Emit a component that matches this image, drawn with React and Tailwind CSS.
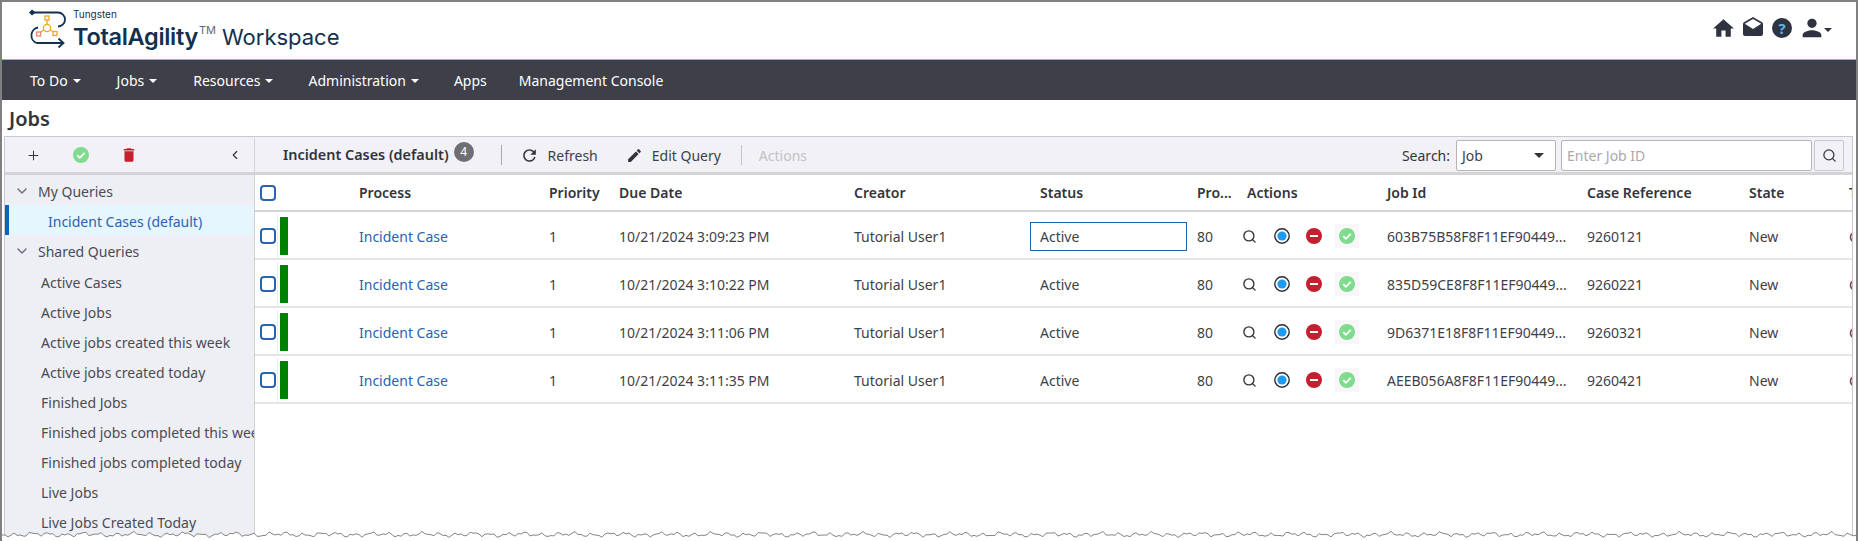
import React from 'react'
import { ChevronDown, ChevronLeft, Plus, Search } from 'lucide-react'
import { MdHome, MdDrafts, MdPerson, MdRefresh, MdEdit, MdDelete } from 'react-icons/md'

const cols = 'grid grid-cols-[23px_71px_190px_71px_234px_186px_157px_50px_140px_200px_162px_100px_60px]'

const rows = [
  { due: '10/21/2024 3:09:23 PM', id: '603B75B58F8F11EF90449...', ref: '9260121', focus: true },
  { due: '10/21/2024 3:10:22 PM', id: '835D59CE8F8F11EF90449...', ref: '9260221' },
  { due: '10/21/2024 3:11:06 PM', id: '9D6371E18F8F11EF90449...', ref: '9260321' },
  { due: '10/21/2024 3:11:35 PM', id: 'AEEB056A8F8F11EF90449...', ref: '9260421' },
]

const shared = ['Active Cases', 'Active Jobs', 'Active jobs created this week', 'Active jobs created today', 'Finished Jobs', 'Finished jobs completed this week', 'Finished jobs completed today', 'Live Jobs', 'Live Jobs Created Today']

const navItems = [
  ['To Do', true, 'ml-[28px]'],
  ['Jobs', true, 'ml-[36px]'],
  ['Resources', true, 'ml-[36px]'],
  ['Administration', true, 'ml-[35px]'],
  ['Apps', false, 'ml-[35px]'],
  ['Management Console', false, 'ml-[32px]'],
]

const Caret = ({ className }) => <span className={`inline-block border-x-[4px] border-t-[4px] border-x-transparent ${className}`} />

const CheckCircle = ({ size = 16 }) => (
  <svg width={size} height={size} viewBox="0 0 16 16">
    <circle cx="8" cy="8" r="8" fill="#7fdc8e" />
    <path d="M4.2 8.2l2.6 2.6 5-5" fill="none" stroke="#fff" strokeWidth="1.8" />
  </svg>
)

const Logo = () => (
  <div className="flex items-start w-[300px]">
    <svg width="72" height="50" viewBox="0 0 72 50" className="shrink-0 -ml-[2px] -mt-[2px]">
      <path d="M33 12.5H58a7 7 0 0 1 0 14" fill="none" stroke="#12304f" strokeWidth="1.8" />
      <path d="M29 9.5l3.5 3-3.5 3-3-3z" transform="translate(3 0)" fill="#12304f" />
      <path d="M38 27.5a8 8 0 0 0 -1 15.5H62" fill="none" stroke="#12304f" strokeWidth="1.8" />
      <path d="M58.5 38.5l5 4.5-5 4.5" fill="none" stroke="#12304f" strokeWidth="1.8" />
      <g fill="none" stroke="#f5a623" strokeWidth="1.3">
        <rect x="45" y="16" width="4" height="4" />
        <path d="M47 20v4M43.5 30l-3 2.5M50.5 30l3 2" />
        <circle cx="47" cy="28" r="3.6" />
        <rect x="53" y="31.5" width="4" height="4" />
      </g>
      <rect x="36.5" y="32" width="4" height="4" fill="none" stroke="#ee8570" strokeWidth="1.3" />
    </svg>
    <div className="text-[#12304f] font-['Inter',sans-serif] leading-none ml-[1px]">
      <div className="text-[10px] mt-[7px] h-[11px]">Tungsten</div>
      <div className="flex items-baseline mt-[5px] whitespace-nowrap">
        <span className="text-[23.5px] font-semibold tracking-[-0.3px]">TotalAgility</span>
        <span className="text-[11px] text-[#5a6b7d] self-start ml-[1px]">TM</span>
        <span className="text-[22px] ml-[6px]">Workspace</span>
      </div>
    </div>
  </div>
)

const TornEdge = () => {
  let top = 'M0 6'
  for (let x = 3; x <= 1858; x += 3) {
    const y = 5.5 + 1.4 * Math.sin(x * 0.37) + 1.1 * Math.sin(x * 1.31 + 1) + 0.8 * Math.sin(x * 0.13)
    top += `L${x} ${y.toFixed(1)}`
  }
  return (
    <svg width="1858" height="12" viewBox="0 0 1858 12" className="absolute left-0 bottom-0">
      <path d={`${top}L1858 12L0 12Z`} fill="#fff" />
      <path d={top} fill="none" stroke="#858585" strokeWidth="1" />
    </svg>
  )
}

export default function App() {
  return (
    <div className="relative w-[1858px] h-[541px] overflow-hidden bg-white font-['Noto_Sans',sans-serif] text-[14px] text-[#3e3f48] border-t-2 border-l-2 border-r-2 border-[#808080]">
      <header className="h-[57px] flex items-start justify-between border-b-0">
        <Logo />
        <div className="flex items-center mt-[12px] mr-[24px] text-[#2f3340]">
          <MdHome size={25} />
          <MdDrafts size={24} className="ml-[5px]" />
          <div className="ml-[7px] w-[20px] h-[20px] rounded-full bg-[#2f3340] text-[#5cb4f0] font-bold text-[15px] leading-[20px] text-center">?</div>
          <MdPerson size={28} className="ml-[6px]" />
          <Caret className="border-t-[#2f3340] -ml-[2px] mt-[3px]" />
        </div>
      </header>

      <nav className="h-[41px] bg-[#3e3f48] border-t border-t-[#e8a33c] flex items-center text-white text-[14px]">
        {navItems.map(([label, caret, gap]) => (
          <div key={label} className={`flex items-center ${gap}`}>
            {label}
            {caret && <Caret className="border-t-white ml-[5px] mt-[2px]" />}
          </div>
        ))}
      </nav>

      <h1 className="h-[36px] pl-[7px] pt-[4px] text-[20px] leading-[30px] font-semibold text-[#33343c]">Jobs</h1>

      <div className="ml-[2px] mr-[3px] h-[405px] border border-[#c9c9cf] flex flex-col">
        <div className="h-[38px] pt-[1px] shrink-0 flex bg-[#f1f1f6] border-b-[3px] border-[#d4d4d8]">
          <div className="w-[250px] shrink-0 flex items-center border-r border-[#d4d4d8] relative">
            <Plus size={15} strokeWidth={1.6} className="ml-[21px] text-[#33343c]" />
            <div className="ml-[32px]"><CheckCircle /></div>
            <MdDelete size={18} className="ml-[31px] text-[#c4202f]" />
            <ChevronLeft size={14} className="ml-[90px] text-[#33343c]" />
          </div>
          <div className="flex-1 flex items-center">
            <span className="ml-[28px] font-semibold text-[14.4px] text-[#33343c]">Incident Cases (default)</span>
            <span className="ml-[5px] mb-[6px] w-[20px] h-[20px] rounded-full bg-[#6f6f73] text-white text-[12px] leading-[20px] text-center">4</span>
            <span className="ml-[27px] w-px h-[20px] bg-[#a8a8ae]" />
            <MdRefresh size={19} className="ml-[18px] text-[#33343c]" />
            <span className="ml-[9px]">Refresh</span>
            <MdEdit size={17} className="ml-[28px] text-[#33343c]" />
            <span className="ml-[9px]">Edit Query</span>
            <span className="ml-[20px] w-px h-[20px] bg-[#c4c4ca]" />
            <span className="ml-[17px] text-[#c2c2c8] text-[14px]">Actions</span>
            <span className="ml-auto text-[#33343c]">Search:</span>
            <div className="ml-[6px] w-[100px] h-[31px] bg-white border border-[#b4b4ba] rounded-[2px] flex items-center justify-between px-[5px]">
              <span className="text-[#3e3f48]">Job</span>
              <Caret className="border-x-[5px] border-t-[5px] border-t-[#33343c] mr-[6px]" />
            </div>
            <div className="ml-[5px] w-[251px] h-[31px] bg-white border border-[#b4b4ba] rounded-[2px] flex items-center px-[5px] text-[#a9a9af]">Enter Job ID</div>
            <div className="ml-[2px] mr-[8px] w-[30px] h-[31px] border border-[#c9c9cf] bg-[#f1f1f6] rounded-[2px] flex items-center justify-center">
              <Search size={15} className="text-[#33343c]" />
            </div>
          </div>
        </div>

        <div className="flex-1 flex min-h-0">
          <aside className="w-[250px] shrink-0 bg-[#eeeff4] border-r border-[#cfcfd4] overflow-hidden whitespace-nowrap">
            <div className="h-[30px] pt-[2px] flex items-center text-[#4a4b55]">
              <ChevronDown size={16} className="ml-[9px] text-[#6b6c75]" />
              <span className="ml-[8px]">My Queries</span>
            </div>
            <div className="h-[30px] pt-[2px] flex items-center bg-[#e6f6fe] border-l-[4px] border-[#0a63bd] pl-[39px] text-[#2a63b4]">Incident Cases (default)</div>
            <div className="h-[30px] pt-[2px] flex items-center text-[#4a4b55]">
              <ChevronDown size={16} className="ml-[9px] text-[#6b6c75]" />
              <span className="ml-[8px]">Shared Queries</span>
            </div>
            {shared.map((q) => (
              <div key={q} className="h-[30px] leading-[31px] pt-[2px] pl-[36px] text-[#4a4b55]">{q}</div>
            ))}
          </aside>

          <div className="flex-1 min-w-0 overflow-hidden">
            <div className={`${cols} h-[37px] items-center font-semibold text-[14px] text-[#33343c] border-b-2 border-[#d4d4d8] w-max`}>
              <div className="pl-[5px]"><span className="block w-[16px] h-[16px] rounded-[4px] border-2 border-[#2a63b4] bg-white" /></div>
              <div />
              <div className="pl-[10px]">Process</div>
              <div className="pl-[10px]">Priority</div>
              <div className="pl-[9px]">Due Date</div>
              <div className="pl-[10px]">Creator</div>
              <div className="pl-[10px]">Status</div>
              <div className="pl-[10px]">Pro...</div>
              <div className="pl-[10px]">Actions</div>
              <div className="pl-[10px]">Job Id</div>
              <div className="pl-[10px]">Case Reference</div>
              <div className="pl-[10px]">State</div>
              <div className="pl-[10px]">Type</div>
            </div>
            {rows.map((r) => (
              <div key={r.ref} className={`${cols} h-[48px] pt-[2px] items-center border-b-2 border-[#e6e6e9] w-max`}>
                <div className="pl-[5px] h-full flex items-center border-r border-[#ececef]"><span className="block w-[16px] h-[16px] rounded-[4px] border-2 border-[#2a63b4] bg-white" /></div>
                <div className="pl-[2px]"><div className="w-[8px] h-[38px] bg-[#008000]" /></div>
                <div className="pl-[10px] text-[#2a63b4]">Incident Case</div>
                <div className="pl-[10px]">1</div>
                <div className="pl-[9px]">{r.due}</div>
                <div className="pl-[10px]">Tutorial User1</div>
                <div className={`pl-[9px] h-[29px] leading-[27px] border ${r.focus ? 'border-[#1c62b0]' : 'border-transparent'}`}>Active</div>
                <div className="pl-[10px]">80</div>
                <div className="flex items-center h-full pl-[5px]">
                  <Search size={15} strokeWidth={2.2} className="text-[#33343c]" />
                  <svg width="16" height="16" viewBox="0 0 16 16" className="ml-[17px]">
                    <circle cx="8" cy="8" r="7.2" fill="#fff" stroke="#2b2c33" strokeWidth="1.4" />
                    <circle cx="8" cy="8" r="4.6" fill="#1e9bf0" />
                  </svg>
                  <svg width="16" height="16" viewBox="0 0 16 16" className="ml-[16px]">
                    <circle cx="8" cy="8" r="8" fill="#c4202f" />
                    <rect x="4" y="7" width="8" height="2" fill="#fff" />
                  </svg>
                  <div className="ml-[13px] w-[24px] h-[24px] bg-[#f8f8f8] flex items-center justify-center"><CheckCircle /></div>
                </div>
                <div className="pl-[10px]">{r.id}</div>
                <div className="pl-[10px]">{r.ref}</div>
                <div className="pl-[10px]">New</div>
                <div className="pl-[10px]">Case</div>
              </div>
            ))}
          </div>
        </div>
      </div>
      <TornEdge />
    </div>
  )
}
